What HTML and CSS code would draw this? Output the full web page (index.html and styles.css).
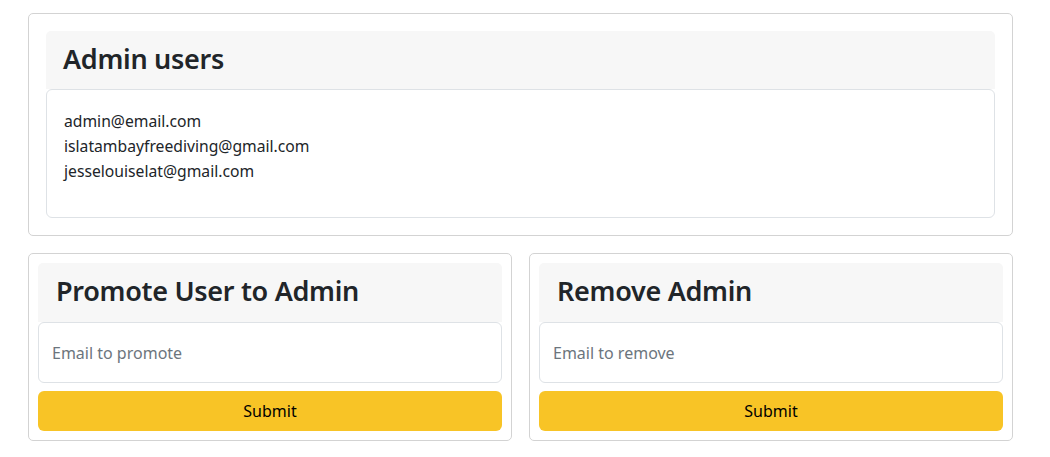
FILE: index.html
```html
<!DOCTYPE html>
<html lang="en">
<head>
<meta charset="utf-8">
<title>Admin</title>
<link rel="stylesheet" href="styles.css">
</head>
<body>
<div class="page">
  <section class="card card-top">
    <div class="card-head"><h2>Admin users</h2></div>
    <div class="list-box">
      <div class="email">admin@email.com</div>
      <div class="email">islatambayfreediving@gmail.com</div>
      <div class="email">jesselouiselat@gmail.com</div>
    </div>
  </section>
  <div class="row">
    <form class="card card-form">
      <div class="card-head"><h2>Promote User to Admin</h2></div>
      <input class="field" type="email" placeholder="Email to promote">
      <button class="btn" type="button">Submit</button>
    </form>
    <form class="card card-form">
      <div class="card-head"><h2>Remove Admin</h2></div>
      <input class="field" type="email" placeholder="Email to remove">
      <button class="btn" type="button">Submit</button>
    </form>
  </div>
</div>
</body>
</html>
```
FILE: styles.css
```css
* { box-sizing: border-box; }
html, body { margin: 0; background: #fff; }
body {
  font-family: "Noto Sans", "Open Sans", sans-serif;
  color: #212529;
  font-size: 16px;
}
.page {
  width: 985px;
  margin-left: 28px;
  padding-top: 13px;
  display: flex;
  flex-direction: column;
  gap: 17px;
}
.card {
  border: 1px solid #d3d3d3;
  border-radius: 5px;
  background: #fff;
}
.card-top { padding: 17px; }
.card-head {
  background: #f7f7f7;
  border-radius: 5px 5px 0 0;
  height: 58px;
  padding: 14px 0 0 17px;
}
.card-head h2 {
  margin: 0;
  font-size: 27px;
  font-weight: 600;
  line-height: 1;
  letter-spacing: -0.3px;
}
.list-box {
  border: 1px solid #dee2e6;
  border-radius: 6px;
  padding: 19px 17px 33px;
  font-size: 15.7px;
  line-height: 25px;
}
.row {
  display: flex;
  gap: 17px;
}
.card-form {
  flex: 1;
  margin: 0;
  padding: 9px;
  display: flex;
  flex-direction: column;
}
.card-form .card-head {
  height: 59px;
  padding-left: 18px;
}
.field {
  height: 61px;
  border: 1px solid #dee2e6;
  border-radius: 6px;
  padding: 0 13px;
  font-family: inherit;
  font-size: 16px;
  color: #212529;
  background: #fff;
  outline: none;
}
.field::placeholder { color: #6c757d; }
.btn {
  margin-top: 8px;
  height: 40px;
  border: none;
  border-radius: 6px;
  background: #f8c426;
  color: #000;
  font-family: inherit;
  font-size: 16px;
  cursor: pointer;
}
```
